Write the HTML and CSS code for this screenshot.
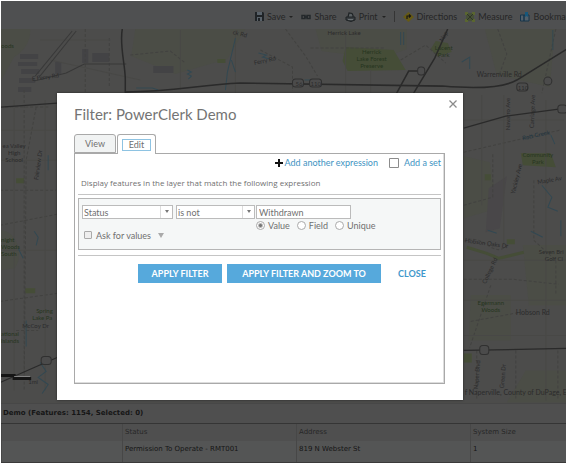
FILE: index.html
```html
<!DOCTYPE html>
<html lang="en">
<head>
<meta charset="utf-8">
<title>Filter: PowerClerk Demo</title>
<link rel="stylesheet" href="styles.css">
</head>
<body>
<header class="toolbar">
  <button class="tool" type="button"><svg width="9" height="9" viewBox="0 0 9 9"><path d="M0 0h8l1 1v8H0z" fill="#202427"/><path d="M2 0h5v3H2zM2 5h5v4H2z" fill="#59626a"/><path d="M3 6h2v3H3z" fill="#202427"/></svg>Save<i class="caret"></i></button>
  <button class="tool" type="button"><svg width="10" height="8" viewBox="0 0 10 8"><path d="M1 2.500h3v3H1zM6 2.500h3v3H6zM3 4h4" fill="none" stroke="#24282b" stroke-width="1.500"/></svg>Share</button>
  <button class="tool" type="button"><svg width="11" height="10" viewBox="0 0 11 10"><path d="M3 5 4 1l3 .5 1 2V5" fill="#5a6063" stroke="#1f2325" stroke-width="1.200"/><path d="M1 5h9v3L6 9.500 1 8z" fill="#3a3f42" stroke="#1f2325"/><path d="M3 7.500h5" stroke="#6a7073"/></svg>Print<i class="caret"></i></button>
  <span class="divider"></span>
  <button class="tool" type="button"><svg width="11" height="10" viewBox="0 0 11 10"><path d="M5.500 0 11 5 5.500 10 0 5z" fill="#665a15"/><path d="M4 7V4h3M6 2.500 7.500 4 6 5.500" fill="none" stroke="#171714" stroke-width="1.200"/></svg>Directions</button>
  <button class="tool" type="button"><svg width="10" height="10" viewBox="0 0 10 10"><path d="M1 1h8v8H1z" fill="#465037"/><path d="M0 0h3v3H0zM7 0h3v3H7zM0 7h3v3H0zM7 7h3v3H7z" fill="#5a6630"/><path d="m2 2 6 6M8 2 2 8" stroke="#2f3526"/></svg>Measure</button>
  <button class="tool" type="button"><svg width="10" height="10" viewBox="0 0 10 10"><path d="M.5 3H4v6H.5zM4 3h5v6H4z" fill="#52606a" stroke="#17344a"/><path d="M5 0h3v5L6.500 4 5 5z" fill="#16577b"/></svg>Bookmarks</button>
</header>

<main class="map">
  <svg class="map-canvas" viewBox="0 29 566 373" preserveAspectRatio="xMidYMid slice" role="img" aria-label="Street map">
    <rect y="29" width="566" height="373" fill="#4c4c4b"/>
    <g fill="#4b4d46">
      <path d="M0 29h30c1 12-6 22-16 28L0 82z"/>
      <path d="M135 29h110l-18 30-52 15-44-18z"/>
      <path d="M315 29h91v20l-25 10-60-8z"/>
      <path d="M484 29h70l-5 58-53-12zM463 156l26 6 8 46-34 10z"/>
      <path d="M522 245h44v60h-38zM470 295h40v45h-42zM525 370h41v32h-60z"/>
      <path d="M0 230c18 0 24 28 14 38L0 270z"/>
    </g>
    <g fill="#454d37">
      <path d="M345 47l48 3 12 20-58 1-5-10z"/>
      <path d="M435 41l12 2 4 9-15 4-6-7zM520 153h30l5 14-33-2zM217 59h8v4h-8zM16 178h8v5h-8zM484 174h6v6h-6zM506 239h8v5h-8zM25 288h10v5H25zM463 353h8v9h-8z"/>
      <path d="M466 247l20 6 12 5 25-6" fill="none" stroke="#454d37" stroke-width="3"/>
    </g>
    <path d="M488 188l18-12-7 52-14 4z" fill="#494749"/>
    <g fill="#434345">
      <path d="M20 54h18v5H20zM18 62h19v4H18zM21 69h18v5H21zM19 78h16v5H19zM18 87h13v5H18zM82 49h6v14h-6zM92 53h17v9H92zM55 62h6v12h-6zM153 66h20v7h-20z"/>
    </g>
    <g fill="none" stroke="#424240" stroke-width="1" stroke-dasharray="3 2">
      <path d="M85 29v64M109 38v50M130 55l40-4 15 12M260 50l32 17 0 24M285 29l20 27 12 20M310 48h75M400 60l25-15 20 18M497 29l9 25-8 22M555 29l-14 64"/>
      <path d="M0 225l57-11M24 90v290M36 107l-10 53-2 230M0 301l57-8M16 330h22M5 107h44M0 190h56"/>
      <path d="M463 152l96-22M463 205l29-8v-44M463 241c20-10 30 20 44 3M490 285l-21 62M463 279h50l45 5M533 180v60l22 20v34M470 321l49-9M515 350v50M476 350v50M557 350v50"/>
    </g>
    <g fill="none" stroke="#484846" stroke-width="1">
      <path d="M463 120h100M481 95v110M503 95v150M463 260h103M545 100v300M463 300h103M463 335h103M0 130h57M0 160h57M14 100v290M45 100v290M0 250h57M180 30v60M235 30v63M345 30v63M370 70v23M40 40h70M50 60l90 20"/>
    </g>
    <g fill="none" stroke="#324852" stroke-width="1">
      <path d="M187 70l4 2-4 2 4 2-3 3M235 38l-8 34-2 18M231 60l4 12M258 53l8 2-4 2 7 2M136 88h16l6 2M400 32v13M403 32v13M304 80h12M461 62l8-5v12"/>
      <path d="M48 155v15M34 231l4 6-2 8M18 248l5 10M26 320v26M40 362l6 9-8 6 10 7-6 9M487 230l9 3M541 185l10 12-4 10 10 4M552 30v20M550 135l4 9M560 220v16M530 231l12 6"/>
    </g>
    <g fill="none" stroke="#2a2a2a">
      <path d="M72 31 35 76M76 31 39 77" stroke="#393939"/>
      <path d="M34 81l32-8 18-9h42" stroke="#383838"/>
      <path d="M122 29c-3 16 3 36 3 50v14" stroke-width="1.500"/>
      <path d="M125 92c50-1 73-7 115-9l202 3c35 3 60 2 74-6l50-31" stroke-width="1.600"/>
      <path d="M447 29l-13 29-21 35M396 93l12-22h14" stroke-width="1.500"/>
      <path d="M463 128l42-12 61-8M0 107l57-4M463 350l103-2" stroke-width="1.200"/>
      <path d="M0 382l34-15 23-10" stroke-width="1.200"/>
      <path d="M566 84v45" stroke-width="1.500"/>
    </g>
    <g fill="#4b4b4b" stroke="#303030">
      <rect x="292" y="79" width="11" height="8" rx="3"/><rect x="309" y="79" width="12" height="8" rx="3"/>
      <rect x="417" y="67" width="7" height="8" rx="3"/><rect x="516" y="83" width="11" height="8" rx="3"/>
      <circle cx="547" cy="81" r="4"/><rect x="479" y="345" width="9" height="9" rx="3"/><rect x="41" y="356" width="10" height="8" rx="3"/>
      <rect x="557" y="105" width="9" height="8" rx="3"/>
    </g>
    <g class="map-label">
      <text x="295" y="86">56</text><text x="310" y="86">110</text><text x="517" y="90">110</text>
      <text x="1" y="48" class="green">oods</text>
      <text transform="translate(32 81) rotate(-8)">E Ferry Rd</text>
      <text transform="translate(254 65) rotate(-13)">Ferry Rd</text>
      <text transform="translate(232 34) rotate(14)">ck Rd</text>
      <text x="327" y="35">Herrick Lake</text>
      <text x="371" y="54" text-anchor="middle" class="green">Herrick<tspan x="371" dy="7">Lake Forest</tspan><tspan x="371" dy="7">Preserve</tspan></text>
      <text x="443" y="50" text-anchor="middle" class="green">Lucent<tspan x="443" dy="7">Park</tspan></text>
      <text transform="translate(442 42) rotate(-60)">Nap</text>
      <text x="476" y="77" class="wide">Warrenville Rd</text>
      <text transform="translate(509 130) rotate(-90)">Navarro Ave</text>
      <text transform="translate(533 128) rotate(-88)">Carriage Ave</text>
      <text transform="translate(522 140) rotate(-12)" class="blue">Rott Creek</text>
      <text x="537" y="157" text-anchor="middle" class="green">Community<tspan x="537" dy="7">Park</tspan></text>
      <text transform="translate(514 194) rotate(-76)">Yackley Ave</text>
      <text transform="translate(537 184) rotate(-10)">Maple Av</text>
      <text transform="translate(464 242) rotate(8)">Hobson Oaks Dr</text>
      <text transform="translate(485 284) rotate(-65)">College Rd</text>
      <text x="538" y="254">Seven Bri<tspan x="544" dy="7">Golf Cl</tspan></text>
      <text x="490" y="305" text-anchor="middle" class="green">Egermann<tspan x="490" dy="7">Woods</tspan></text>
      <text x="515" y="315" class="wide">Hobson Rd</text>
      <text transform="translate(477 389) rotate(-85)">Naper Blvd</text>
      <text transform="translate(503 388) rotate(-85)">Green Dr</text>
      <text transform="translate(38 180) rotate(-82)">Fairview Dr</text>
      <text x="14" y="148" text-anchor="middle">ea Valley<tspan x="14" dy="7">High</tspan><tspan x="14" dy="7">School</tspan></text>
      <text x="1" y="242" class="green">night<tspan x="1" dy="7">Woods</tspan><tspan x="1" dy="7">South</tspan></text>
      <text x="36" y="313" class="green">Spring<tspan x="32" dy="7">Lake Pa</tspan></text>
      <text x="22" y="328">McCoy Dr</text>
      <text x="1" y="336" class="green">ational<tspan x="1" dy="7">Islands</tspan></text>
      <text x="28" y="384">1mi</text>
      <text x="464" y="395" class="wide">f Naperville, County of DuPage, Esri, HERE</text>
    </g>
    <path d="M0 375h14v3h17" fill="none" stroke="#151515" stroke-width="3"/>
    <path d="M14 376h16" stroke="#858585" stroke-width="1"/>
  </svg>
</main>

<section class="features">
  <h2 class="features-title">Demo (Features: 1154, Selected: 0)</h2>
  <table class="features-table">
    <colgroup><col class="col-name"><col class="col-status"><col class="col-address"><col></colgroup>
    <thead><tr><th></th><th>Status</th><th>Address</th><th>System Size</th></tr></thead>
    <tbody><tr><td></td><td>Permission To Operate - RMT001</td><td>819 N Webster St</td><td>1</td></tr></tbody>
  </table>
</section>

<div class="overlay">
  <section class="dialog" role="dialog" aria-labelledby="dialog-title">
    <header class="dialog-head">
      <h1 id="dialog-title">Filter: PowerClerk Demo</h1>
      <button class="dismiss" type="button" aria-label="Close dialog"><svg width="8" height="8" viewBox="0 0 8 8"><path d="m.5 .5 7 7M7.500 .5l-7 7" stroke="#8b8b8b" stroke-width="1.300"/></svg></button>
    </header>
    <div class="tabs" role="tablist">
      <button class="tab" type="button" role="tab">View</button>
      <button class="tab tab-active" type="button" role="tab" aria-selected="true"><span class="tab-focus">Edit</span></button>
    </div>
    <div class="pane">
      <div class="links">
        <a class="add" href="#"><svg width="8" height="8" viewBox="0 0 8 8"><path d="M4 0v8M0 4h8" stroke="#111" stroke-width="2"/></svg>Add another expression</a>
        <a class="add add-set" href="#"><svg width="10" height="10" viewBox="0 0 10 10"><path d="M.5 .5h9v9h-9z" fill="#fff" stroke="#8c8c8c"/></svg>Add a set</a>
      </div>
      <p class="intro">Display features in the layer that match the following expression</p>
      <form class="expression">
        <div class="left">
          <div class="selects">
            <span class="select select-field"><select aria-label="Field"><option>Status</option></select></span>
            <span class="select select-operator"><select aria-label="Operator"><option>is not</option></select></span>
          </div>
          <label class="ask"><input type="checkbox">Ask for values<i class="ask-caret"></i></label>
        </div>
        <div class="right">
          <input class="value" type="text" value="Withdrawn" aria-label="Value">
          <div class="radios">
            <label><input type="radio" name="kind" checked>Value</label>
            <label><input type="radio" name="kind">Field</label>
            <label><input type="radio" name="kind">Unique</label>
          </div>
        </div>
      </form>
      <div class="actions">
        <button class="action" type="button">APPLY FILTER</button>
        <button class="action action-wide" type="button">APPLY FILTER AND ZOOM TO</button>
        <button class="action action-plain" type="button">CLOSE</button>
      </div>
    </div>
  </section>
</div>
</body>
</html>
```
FILE: styles.css
```css
* { box-sizing: border-box; }

body {
  margin: 0;
  height: 100vh;
  padding: 1px 0 1px 1px;
  display: flex;
  flex-direction: column;
  overflow: hidden;
  background: #fff;
  font-family: Lato, "Liberation Sans", sans-serif;
  font-size: 9px;
  color: #707070;
}

button, input, select { font: inherit; color: inherit; margin: 0; }
button { border: 0; padding: 0; background: none; white-space: nowrap; }

/* Toolbar */
.toolbar {
  flex: none;
  height: 28px;
  padding-left: 254px;
  padding-top: 3px;
  display: flex;
  align-items: center;
  gap: 8px;
  overflow: hidden;
  background: #4f5051;
  color: #262626;
}
.tool { flex: none; display: flex; align-items: center; gap: 3px; }
.caret {
  margin-left: 1px;
  border: 2px solid transparent;
  border-top-color: #222;
  border-bottom: 0;
}
.divider { flex: none; height: 11px; border-left: 1px solid #353535; }

/* Map */
.map { flex: 1; min-height: 0; background: #4c4c4b; }
.map-canvas { display: block; width: 100%; height: 100%; }
.map-label { font-size: 6px; fill: #2b2b2b; }
.map-label .wide { font-size: 7px; }
.map-label .green { fill: #26351f; }
.map-label .blue { fill: #1f3541; }

/* Feature table */
.features {
  flex: none;
  background: #4f4f4f;
  color: #161616;
  font-family: "DejaVu Sans", sans-serif;
  font-size: 7px;
}
.features-title {
  margin: 0;
  height: 21px;
  padding-left: 2px;
  border-top: 1px solid #474747;
  border-bottom: 1px solid #353535;
  font-size: 7px;
  line-height: 19px;
}
.features-table { width: 100%; table-layout: fixed; border-collapse: collapse; }
.col-name { width: 121px; }
.col-status { width: 174px; }
.col-address { width: 174px; }
.features-table th, .features-table td {
  padding: 0 2px;
  border-left: 1px solid #474747;
  text-align: left;
  white-space: nowrap;
}
.features-table th { height: 17px; font-weight: 400; color: #272727; }
.features-table td { height: 22px; padding-bottom: 4px; border-bottom: 1px solid #3a3a3a; background: #545555; }

/* Dialog */
.overlay { position: absolute; inset: 0; padding: 93px 103px 64px 57px; }
.dialog {
  height: 100%;
  padding: 0 18px 16px 17px;
  display: flex;
  flex-direction: column;
  background: #fff;
  box-shadow: 0 0 2px #222;
}
.dialog-head { flex: none; height: 41px; display: flex; justify-content: space-between; }
h1 { margin: 0; padding-top: 12px; font-size: 15px; line-height: 19px; font-weight: 400; color: #747474; }
.dismiss { height: 8px; margin: 7px -12px 0 0; line-height: 0; }

.tabs { flex: none; display: flex; gap: 1px; }
.tab {
  height: 19px;
  min-width: 42px;
  border: 1px solid #a9a9a9;
  border-radius: 3px 3px 0 0;
  background: #f1f3f3;
  font-size: 9px;
}
.tab-active { min-width: 39px; padding: 0 4px; height: 20px; margin-bottom: -1px; border-bottom: 0; background: #fff; z-index: 1; }
.tab-focus { display: block; border: 1px solid #8ec3e2; line-height: 10px; }

.pane { flex: 1; padding: 0 3px; border: 1px solid #a9a9a9; box-shadow: inset -1px -1px #ddd; }
.links { height: 17px; display: flex; align-items: center; justify-content: flex-end; gap: 11px; }
.add { display: flex; align-items: center; gap: 2px; color: #3e93c2; text-decoration: none; }
.add-set { gap: 5px; }
.intro {
  margin: 0;
  height: 24px;
  padding: 4px 3px 0;
  border-bottom: 1px solid #c5c5c5;
  font-family: "Open Sans", sans-serif;
  font-size: 8px;
  line-height: 15px;
  white-space: nowrap;
}

.expression {
  margin-top: 3px;
  height: 52px;
  padding: 6px 3px;
  display: flex;
  gap: 1px;
  border: 1px solid #b5b5b5;
  background: #f5f7f7;
}
.selects { display: flex; gap: 3px; }
.select { position: relative; display: block; height: 14px; border: 1px solid #bbb; background: #fff; }
.select-field { width: 91px; }
.select-operator { width: 79px; }
.select select {
  display: block;
  width: 100%;
  height: 12px;
  padding: 0 14px 0 1px;
  border: 0;
  appearance: none;
  background: none;
}
.select::before { content: ""; position: absolute; right: 11px; top: 0; bottom: 0; border-left: 1px solid #ddd; }
.select::after {
  content: "";
  position: absolute;
  right: 3px;
  top: 4px;
  border: 2px solid transparent;
  border-top: 3px solid #777;
  border-bottom: 0;
}
.ask { display: flex; align-items: center; gap: 4px; height: 12px; margin-top: 10px; padding-left: 2px; }
.ask input { width: 8px; height: 8px; appearance: none; border: 1px solid #aaa; border-radius: 1px; background: #eee; }
.ask-caret { margin-left: 3px; border: 3px solid transparent; border-top: 5px solid #aaa; border-bottom: 0; }
.value { display: block; width: 95px; height: 14px; padding: 0 2px; border: 1px solid #bbb; background: #fff; }
.radios { display: flex; gap: 7px; height: 12px; }
.radios label { display: flex; align-items: center; gap: 3px; }
.radios input {
  width: 9px;
  height: 9px;
  appearance: none;
  border: 1px solid #aaa;
  border-radius: 50%;
  background: #fff;
}
.radios input:checked { background: radial-gradient(circle, #777 0 1px, #fff 3px); }

.actions { margin-top: 5px; padding: 8px 3px 0; border-top: 1px solid #c5c5c5; display: flex; justify-content: flex-end; gap: 5px; }
.action { min-width: 84px; height: 19px; background: #56a9dc; color: #fff; font-weight: 700; }
.action-wide { min-width: 154px; }
.action-plain { min-width: 52px; background: none; color: #3f98cb; }
```
